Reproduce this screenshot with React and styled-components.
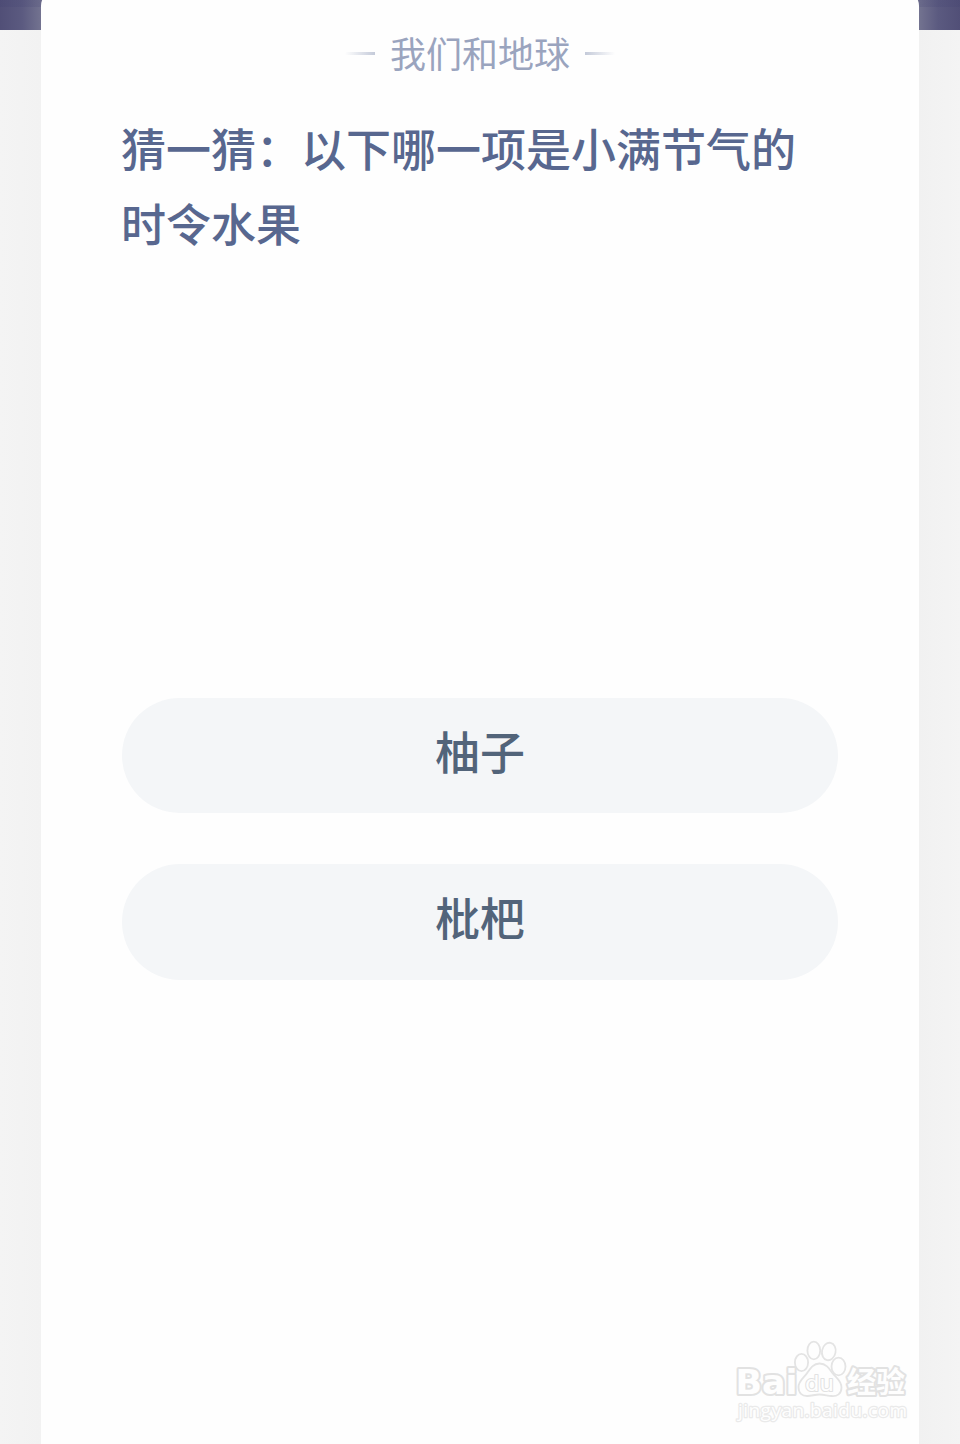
import React from "react";
import styled, { createGlobalStyle } from "styled-components";

const options = ["柚子", "枇杷"];

const App = () => {
  return (
    <>
      <GlobalStyle />
      <Page>
        <Card>
          <Topic>
            <Dash />
            <TopicName>我们和地球</TopicName>
            <Dash $flip />
          </Topic>
          <Question>猜一猜：以下哪一项是小满节气的时令水果</Question>
          <Options>
            {options.map((option) => (
              <Option key={option}>{option}</Option>
            ))}
          </Options>
        </Card>
        <Watermark />
      </Page>
    </>
  );
};

export default App;

const Watermark = () => (
  <Mark viewBox="0 0 200 110">
    <g fill="#fefefe" stroke="#e4e4e4" strokeWidth="1.8">
      <ellipse cx="81.5" cy="32.5" rx="6.6" ry="8.6" />
      <ellipse cx="93.8" cy="20.5" rx="6.4" ry="8.8" />
      <ellipse cx="108.8" cy="21.5" rx="6.8" ry="8.8" transform="rotate(12 108.8 21.5)" />
      <ellipse cx="118.5" cy="36.5" rx="7" ry="8.8" />
      <path d="M99.500 33.500C106 33.500 109 38 112 42.500C116 48 121.500 50.500 121.500 57.500C121.500 64 117 66.500 111.500 66C107 65.600 104 64.500 99.500 64.500C95 64.500 92 65.800 87.500 66C82 66.200 78.500 63 78.500 57C78.500 50.500 84 48 87.500 42.500C90.500 38 93.500 33.500 99.500 33.500Z" />
    </g>
    <Brand x="15.500" y="64" fontSize="34" textLength="62" lengthAdjust="spacingAndGlyphs">
      Bai
    </Brand>
    <Brand x="85" y="61" fontSize="22" textLength="29" lengthAdjust="spacingAndGlyphs" $thin>
      du
    </Brand>
    <Brand x="127" y="62.500" fontSize="29" textLength="58" lengthAdjust="spacingAndGlyphs">
      经验
    </Brand>
    <Site x="18" y="87" textLength="169">
      jingyan.baidu.com
    </Site>
  </Mark>
);

const GlobalStyle = createGlobalStyle`
  * {
    box-sizing: border-box;
  }

  body {
    margin: 0;
    font-family: "Noto Sans CJK SC", sans-serif;
  }
`;

const Page = styled.main`
  position: relative;
  width: 960px;
  height: 1444px;
  padding: 0 41px;
  overflow: hidden;
  background:
    linear-gradient(rgba(60, 60, 110, 0.16), rgba(60, 60, 110, 0.16)) 0 0 / 100% 7px no-repeat,
    linear-gradient(90deg, #514f77, #5b5a80 22px, #737390 41px, #737390 919px, #5b5a80 938px, #514f77) 0 0 / 100% 30px no-repeat,
    linear-gradient(90deg, #f4f4f4, #f2f2f2 41px, #f1f1f1 919px, #f4f4f4);
`;

const Card = styled.section`
  height: 1454px;
  margin-top: -10px;
  padding: 35px 81px 0;
  border-radius: 16px 16px 0 0;
  background: #fefefe;
`;

const Topic = styled.div`
  display: flex;
  align-items: center;
  justify-content: center;
  gap: 15px;
  height: 54px;
`;

const TopicName = styled.span`
  color: #9aa4be;
  font-size: 36px;
  line-height: 54px;
  font-weight: 400;
`;

const Dash = styled.i`
  width: 30px;
  height: 3px;
  margin-top: 3px;
  background: linear-gradient(
    ${({ $flip }) => ($flip ? "270deg" : "90deg")},
    rgba(190, 196, 214, 0),
    #c4cad9
  );
`;

const Question = styled.h1`
  margin: 31px 0 0 -1px;
  height: 152px;
  color: #58678f;
  font-size: 45px;
  line-height: 75px;
  font-weight: 500;
`;

const Options = styled.div`
  display: flex;
  flex-direction: column;
  gap: 51px;
  margin-top: 436px;
`;

const Option = styled.button`
  height: 115px;
  padding: 0 0 11px;
  border: 0;
  border-radius: 58px;
  background: #f4f6f8;
  color: #52647a;
  font-family: inherit;
  font-size: 45px;
  font-weight: 500;

  & + & {
    height: 116px;
    padding-bottom: 12px;
  }
`;

const Mark = styled.svg`
  position: absolute;
  left: 720px;
  top: 1330px;
  width: 200px;
  height: 110px;
`;

const Brand = styled.text`
  fill: #fefefe;
  stroke: #e2e2e2;
  stroke-width: ${({ $thin }) => ($thin ? "2px" : "4px")};
  stroke-linejoin: round;
  paint-order: stroke;
  font-family: "DejaVu Sans", "Noto Sans CJK SC", sans-serif;
  font-weight: ${({ $thin }) => ($thin ? 400 : 700)};
`;

const Site = styled.text`
  fill: #fefefe;
  stroke: #eaeaea;
  stroke-width: 2.500px;
  stroke-linejoin: round;
  paint-order: stroke;
  font-family: "Open Sans", sans-serif;
  font-size: 19px;
`;
